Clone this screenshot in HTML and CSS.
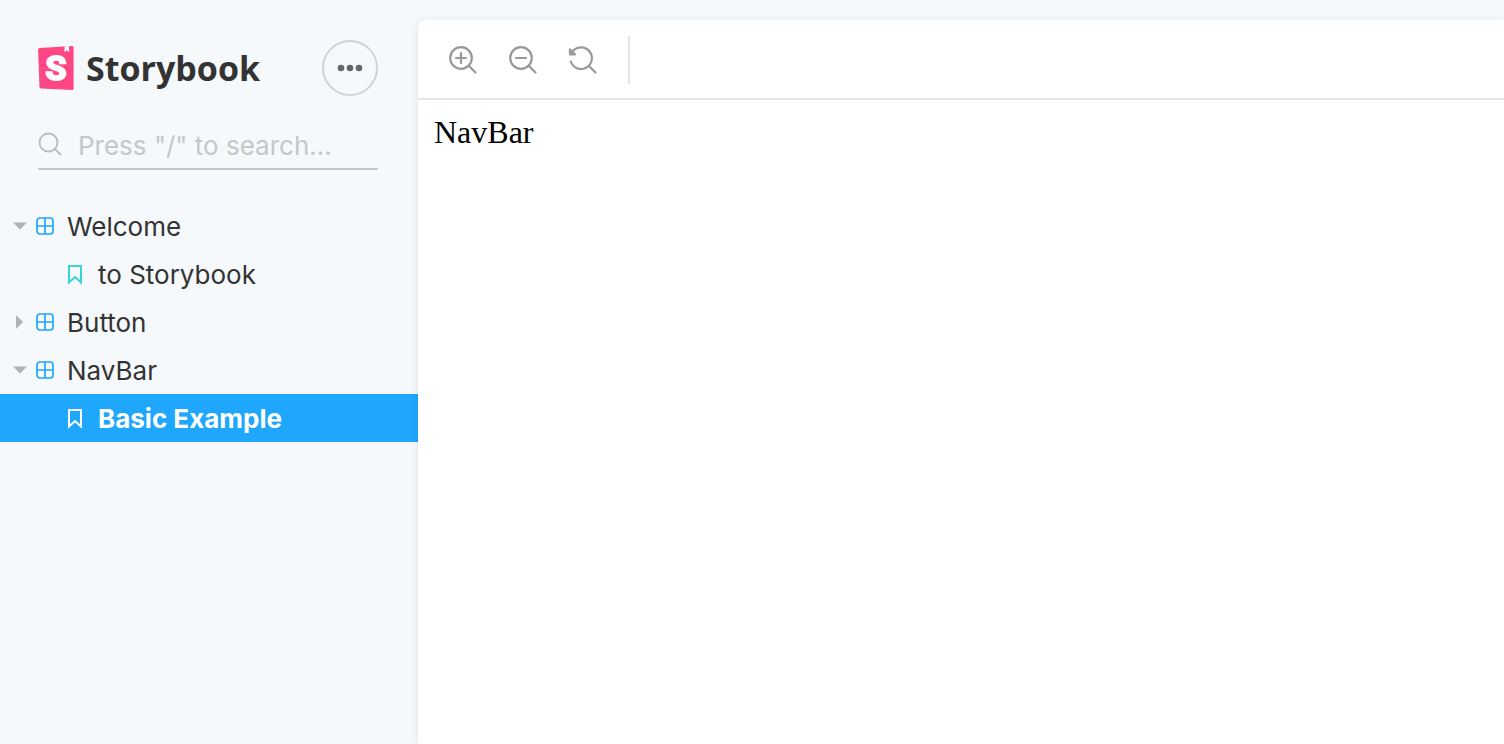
FILE: index.html
```html
<!DOCTYPE html>
<html lang="en">
<head>
<meta charset="utf-8">
<title>Storybook</title>
<link rel="stylesheet" href="styles.css">
</head>
<body>
<div class="app">
  <aside class="sidebar">
    <header class="brand-row">
      <a class="brand" href="#">
        <svg class="brand-mark" viewBox="0 0 36 44" aria-hidden="true">
          <path fill="#ff4785" d="M1.800 1.900 34 0q1.600 0 1.600 1.600v40.800q0 1.600-1.600 1.600L3.200 42.500q-1.600-.1-1.700-1.700L.1 3.700Q.1 2 1.800 1.900Z"/>
          <path fill="#fff" d="M26.700.4 31 .1l.2 6-2.300-1.700-2.600 1.600Z"/>
          <text class="brand-letter" x="18" y="34" text-anchor="middle">S</text>
        </svg>
        <span class="brand-name">Storybook</span>
      </a>
      <button class="menu-button" type="button" aria-label="Menu">
        <svg class="menu-dots" viewBox="0 0 26 8" fill="currentColor" aria-hidden="true"><circle cx="4" cy="4" r="3.300"/><circle cx="13" cy="4" r="3.300"/><circle cx="22" cy="4" r="3.300"/></svg>
      </button>
    </header>
    <label class="search">
      <svg class="search-icon" viewBox="0 0 24 24" fill="none" stroke="currentColor" stroke-width="1.800" stroke-linecap="round" aria-hidden="true"><circle cx="10.500" cy="10.500" r="9"/><path d="m17 17 5.500 5.500"/></svg>
      <input class="search-input" type="text" placeholder='Press "/" to search...' aria-label="Search">
    </label>
    <nav class="tree">
      <a class="item" href="#">
        <svg class="arrow" viewBox="0 0 14 14" aria-hidden="true"><path fill="currentColor" d="M0 3.500h14L7 10.500Z"/></svg>
        <svg class="component" viewBox="0 0 18 18" aria-hidden="true"><path d="M9 1v16M1 9h16"/><rect x="1" y="1" width="16" height="16" rx="3"/></svg>
        <span class="label">Welcome</span>
      </a>
      <a class="item story" href="#">
        <svg class="bookmark" viewBox="0 0 14 20" aria-hidden="true"><path d="M1 2h12v16.500l-6-5.500-6 5.500Z"/></svg>
        <span class="label">to Storybook</span>
      </a>
      <a class="item" href="#">
        <svg class="arrow" viewBox="0 0 14 14" aria-hidden="true"><path fill="currentColor" d="M3 0v14l7-7Z"/></svg>
        <svg class="component" viewBox="0 0 18 18" aria-hidden="true"><path d="M9 1v16M1 9h16"/><rect x="1" y="1" width="16" height="16" rx="3"/></svg>
        <span class="label">Button</span>
      </a>
      <a class="item" href="#">
        <svg class="arrow" viewBox="0 0 14 14" aria-hidden="true"><path fill="currentColor" d="M0 3.500h14L7 10.500Z"/></svg>
        <svg class="component" viewBox="0 0 18 18" aria-hidden="true"><path d="M9 1v16M1 9h16"/><rect x="1" y="1" width="16" height="16" rx="3"/></svg>
        <span class="label">NavBar</span>
      </a>
      <a class="item story selected" href="#" aria-current="page">
        <svg class="bookmark" viewBox="0 0 14 20" aria-hidden="true"><path d="M1 2h12v16.500l-6-5.500-6 5.500Z"/></svg>
        <span class="label">Basic Example</span>
      </a>
    </nav>
  </aside>
  <main class="panel">
    <div class="toolbar">
      <button class="tool" type="button" aria-label="Zoom in"><svg viewBox="-1 0 28 28" aria-hidden="true"><circle cx="12" cy="12" r="10.800"/><path d="m20 20 6.500 6.500M12 7v10M7 12h10"/></svg></button>
      <button class="tool" type="button" aria-label="Zoom out"><svg viewBox="-1 0 28 28" aria-hidden="true"><circle cx="12" cy="12" r="10.800"/><path d="m20 20 6.500 6.500M7 12h10"/></svg></button>
      <button class="tool" type="button" aria-label="Reset zoom"><svg viewBox="-1 0 28 28" aria-hidden="true"><path d="m20 20 6.500 6.500M1.800 15.500A10.800 10.800 0 1 0 4 5"/><path class="tip" d="M1 3.500v4.800h5Z"/></svg></button>
      <span class="divider"></span>
    </div>
    <div class="preview">NavBar</div>
  </main>
</div>
</body>
</html>
```
FILE: styles.css
```css
* { box-sizing: border-box; }

body {
  margin: 0;
  background: #f6f9fc;
  color: #333;
  font-family: Inter, "Liberation Sans", sans-serif;
  font-size: 26px;
}

button { padding: 0; border: 0; background: none; font: inherit; }
a { color: inherit; text-decoration: none; }
svg { display: block; flex: none; overflow: visible; }

.app { display: flex; min-height: 100vh; }

.sidebar { flex: none; width: 418px; padding-top: 40px; }

.brand-row {
  display: flex;
  align-items: center;
  justify-content: space-between;
  padding: 0 40px 0 38px;
}
.brand { display: flex; align-items: center; gap: 12px; }
.brand-mark { width: 36px; height: 44px; }
.brand-letter {
  fill: #fff;
  stroke: #fff;
  stroke-width: 2px;
  font: 700 34px Roboto, sans-serif;
}
.brand-name { font: 700 34px/44px "Open Sans", sans-serif; }

.menu-button {
  display: grid;
  place-items: center;
  width: 56px;
  height: 56px;
  border: 2px solid #d0d3d6;
  border-radius: 50%;
  color: #666;
}
.menu-dots { width: 26px; height: 8px; }

.search {
  display: flex;
  align-items: center;
  gap: 16px;
  height: 50px;
  margin: 24px 40px 0 38px;
  border-bottom: 2px solid #c4c7ca;
  color: #b9bbbe;
}
.search-icon { width: 24px; height: 24px; }
.search-input {
  flex: 1;
  min-width: 0;
  padding: 2px 0 0;
  border: 0;
  outline: 0;
  background: none;
  color: #333;
  font: inherit;
}
.search-input::placeholder { color: #c5c7c9; opacity: 1; }

.tree { padding-top: 32px; }
.item {
  display: flex;
  align-items: center;
  height: 48px;
  padding-left: 13px;
}
.label { padding-top: 2px; line-height: 46px; }
.story { gap: 16px; padding-left: 68px; }
.selected { background: #1ea7fd; color: #fff; font-weight: 700; }

.arrow { width: 14px; height: 14px; margin-right: 9px; color: #b0b2b4; }
.component { width: 18px; height: 18px; margin-right: 13px; stroke: #1ea7fd; }
.bookmark { width: 14px; height: 20px; stroke: #37d5d3; }
.selected .bookmark { stroke: #fff; }
.component, .bookmark { fill: none; stroke-width: 1.7; }
.bookmark { stroke-width: 2; }

.panel {
  flex: 1;
  min-width: 0;
  margin-top: 20px;
  border-top-left-radius: 8px;
  background: #fff;
  box-shadow: 0 2px 10px rgba(0, 0, 0, 0.1);
}
.toolbar {
  display: flex;
  align-items: center;
  gap: 32px;
  height: 80px;
  padding: 2px 0 0 30px;
  border-bottom: 2px solid #e5e5e5;
}
.tool svg {
  width: 28px;
  height: 28px;
  fill: none;
  stroke: #999;
  stroke-width: 2.2;
  stroke-linecap: round;
}
.tool .tip { fill: #999; stroke-linejoin: round; }
.divider { width: 2px; height: 48px; background: #e5e5e5; }

.preview {
  padding: 16px;
  color: #000;
  font: 32px/32px "Liberation Serif", serif;
}
```
